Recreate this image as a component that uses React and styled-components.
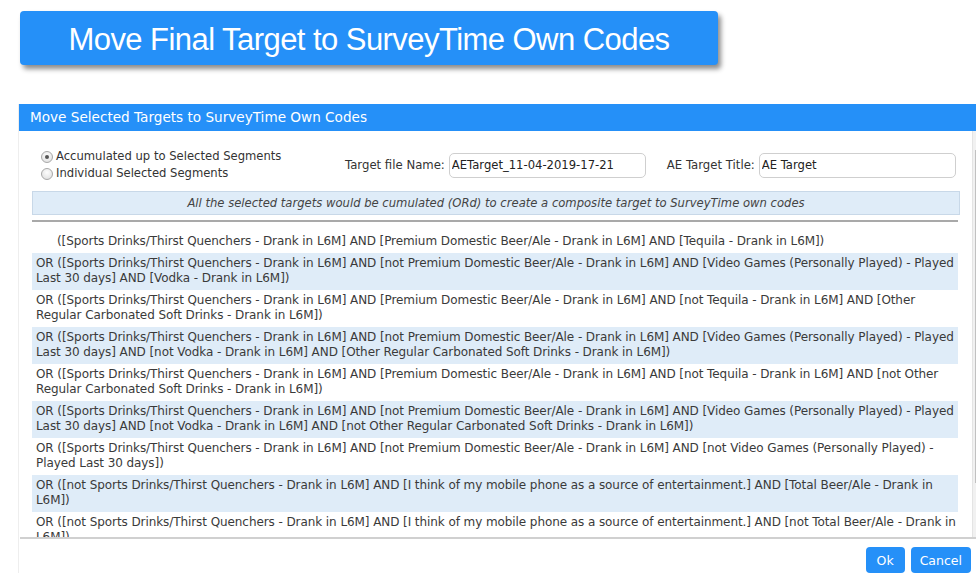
import styled, { createGlobalStyle } from "styled-components";

const GlobalStyle = createGlobalStyle`
  html, body {
    margin: 0;
    padding: 0;
    background: #fff;
    overflow: hidden;
  }
  body {
    width: 976px;
    height: 584px;
    font-family: "DejaVu Sans", Verdana, sans-serif;
  }
`;

const Pagina = styled.div`
  width: 976px;
  height: 584px;
  overflow: hidden;
  padding-top: 11px;
  box-sizing: border-box;
`;

const BotaoGrande = styled.div`
  margin-left: 20px;
  width: 698px;
  height: 54px;
  box-sizing: border-box;
  padding-top: 3px;
  background: #2590f8;
  border-radius: 4px;
  box-shadow: 3px 4px 5px rgba(0, 0, 0, 0.45);
  color: #fff;
  font-family: "Liberation Sans", Arial, sans-serif;
  font-size: 31px;
  display: flex;
  align-items: center;
  justify-content: center;
  letter-spacing: -0.55px;
`;

const Dialogo = styled.div`
  margin: 39px 0 0 18px;
  width: 970px;
  border-left: 1px solid #eeeeee;
  background: #fff;
`;

const Cabecalho = styled.div`
  height: 27px;
  background: #2590f8;
  color: #fff;
  font-size: 13.6px;
  line-height: 27px;
  padding-left: 11px;
`;

const Corpo = styled.div`
  display: flex;
  height: 406px;
`;

const Conteudo = styled.div`
  flex: 1;
  overflow: hidden;
  padding: 0 12px 0 13px;
`;

const BarraRolagem = styled.div`
  width: 17px;
  background: #f1f1f1;
  border-left: 1px solid #e4e4e4;
  display: flex;
  flex-direction: column;
  padding: 19px 0 0 2px;
  box-sizing: border-box;
`;

const Polegar = styled.div`
  width: 9px;
  height: 333px;
  background: #c1c1c1;
`;

const Opcoes = styled.div`
  display: flex;
  align-items: center;
  padding: 17px 0 0 9px;
  height: 38px;
`;

const GrupoRadio = styled.div`
  width: 304px;
  display: flex;
  flex-direction: column;
  margin-top: -4px;
`;

const RotuloRadio = styled.label`
  display: flex;
  align-items: center;
  gap: 3px;
  font-size: 11.6px;
  line-height: 17px;
  color: #333;
`;

const Bolinha = styled.span`
  width: 10px;
  height: 10px;
  border-radius: 50%;
  border: 1px solid #a8a8a8;
  background: radial-gradient(circle at 50% 35%, #fdfdfd, #dcdcdc);
  display: flex;
  align-items: center;
  justify-content: center;

  &::after {
    content: "";
    width: 4px;
    height: 4px;
    border-radius: 50%;
    background: ${(p) => (p.marcado ? "#555" : "transparent")};
  }
`;

const Campo = styled.div`
  display: flex;
  align-items: center;
  gap: 4px;
  margin-right: ${(p) => p.espaco || 0}px;
  margin-top: -4px;
`;

const RotuloCampo = styled.span`
  font-size: 11.7px;
  color: #333;
`;

const Entrada = styled.input`
  width: 197px;
  height: 25px;
  box-sizing: border-box;
  border: 1px solid #cfcfcf;
  border-radius: 5px;
  padding: 0 2px;
  font-family: "DejaVu Sans", Verdana, sans-serif;
  font-size: 11.6px;
  color: #222;
  outline: none;
`;

const Aviso = styled.div`
  margin-top: 5px;
  height: 24px;
  box-sizing: border-box;
  background: #dfecf8;
  border: 1px solid #c8d8e8;
  font-size: 11.6px;
  font-style: italic;
  color: #444;
  text-align: center;
  line-height: 22px;
`;

const Separador = styled.div`
  margin-top: 5px;
  height: 2px;
  background: #a9a9a9;
  margin-right: 2px;
`;

const Lista = styled.div`
  margin-top: 9px;
  margin-right: 2px;
`;

const Linha = styled.div`
  padding: 3px 1px 3px ${(p) => (p.primeira ? 25 : 4)}px;
  background: ${(p) => (p.destaque ? "#dfecf8" : "transparent")};
  font-size: 12px;
  letter-spacing: -0.08px;
  line-height: 15.5px;
  color: #3a3a3a;
`;

const Rodape = styled.div`
  border-top: 2px solid #d0d0d0;
  display: flex;
  justify-content: flex-end;
  gap: 6px;
  padding: 8px 18px 0 0;
  margin-left: 1px;
`;

const Botao = styled.button`
  height: 26px;
  padding: 0 ${(p) => p.lado || 9}px;
  border: none;
  border-radius: 4px;
  background: #2590f8;
  color: #fff;
  font-family: "DejaVu Sans", Verdana, sans-serif;
  font-size: 12.5px;
`;

const alvos = [
  "([Sports Drinks/Thirst Quenchers - Drank in L6M] AND [Premium Domestic Beer/Ale - Drank in L6M] AND [Tequila - Drank in L6M])",
  "OR ([Sports Drinks/Thirst Quenchers - Drank in L6M] AND [not Premium Domestic Beer/Ale - Drank in L6M] AND [Video Games (Personally Played) - Played Last 30 days] AND [Vodka - Drank in L6M])",
  "OR ([Sports Drinks/Thirst Quenchers - Drank in L6M] AND [Premium Domestic Beer/Ale - Drank in L6M] AND [not Tequila - Drank in L6M] AND [Other Regular Carbonated Soft Drinks - Drank in L6M])",
  "OR ([Sports Drinks/Thirst Quenchers - Drank in L6M] AND [not Premium Domestic Beer/Ale - Drank in L6M] AND [Video Games (Personally Played) - Played Last 30 days] AND [not Vodka - Drank in L6M] AND [Other Regular Carbonated Soft Drinks - Drank in L6M])",
  "OR ([Sports Drinks/Thirst Quenchers - Drank in L6M] AND [Premium Domestic Beer/Ale - Drank in L6M] AND [not Tequila - Drank in L6M] AND [not Other Regular Carbonated Soft Drinks - Drank in L6M])",
  "OR ([Sports Drinks/Thirst Quenchers - Drank in L6M] AND [not Premium Domestic Beer/Ale - Drank in L6M] AND [Video Games (Personally Played) - Played Last 30 days] AND [not Vodka - Drank in L6M] AND [not Other Regular Carbonated Soft Drinks - Drank in L6M])",
  "OR ([Sports Drinks/Thirst Quenchers - Drank in L6M] AND [not Premium Domestic Beer/Ale - Drank in L6M] AND [not Video Games (Personally Played) - Played Last 30 days])",
  "OR ([not Sports Drinks/Thirst Quenchers - Drank in L6M] AND [I think of my mobile phone as a source of entertainment.] AND [Total Beer/Ale - Drank in L6M])",
  "OR ([not Sports Drinks/Thirst Quenchers - Drank in L6M] AND [I think of my mobile phone as a source of entertainment.] AND [not Total Beer/Ale - Drank in L6M])",
];

function App() {
  return (
    <Pagina>
      <GlobalStyle />
      <BotaoGrande>Move Final Target to SurveyTime Own Codes</BotaoGrande>
      <Dialogo>
        <Cabecalho>Move Selected Targets to SurveyTime Own Codes</Cabecalho>
        <Corpo>
          <Conteudo>
            <Opcoes>
              <GrupoRadio>
                <RotuloRadio>
                  <Bolinha marcado />
                  Accumulated up to Selected Segments
                </RotuloRadio>
                <RotuloRadio>
                  <Bolinha />
                  Individual Selected Segments
                </RotuloRadio>
              </GrupoRadio>
              <Campo espaco={21}>
                <RotuloCampo>Target file Name:</RotuloCampo>
                <Entrada defaultValue="AETarget_11-04-2019-17-21" />
              </Campo>
              <Campo>
                <RotuloCampo>AE Target Title:</RotuloCampo>
                <Entrada defaultValue="AE Target" />
              </Campo>
            </Opcoes>
            <Aviso>
              All the selected targets would be cumulated (ORd) to create a
              composite target to SurveyTime own codes
            </Aviso>
            <Separador />
            <Lista>
              {alvos.map((texto, i) => (
                <Linha key={i} primeira={i === 0} destaque={i % 2 === 1}>
                  {texto}
                </Linha>
              ))}
            </Lista>
          </Conteudo>
          <BarraRolagem>
            <Polegar />
          </BarraRolagem>
        </Corpo>
        <Rodape>
          <Botao lado={11}>Ok</Botao>
          <Botao>Cancel</Botao>
        </Rodape>
      </Dialogo>
    </Pagina>
  );
}

export default App;
